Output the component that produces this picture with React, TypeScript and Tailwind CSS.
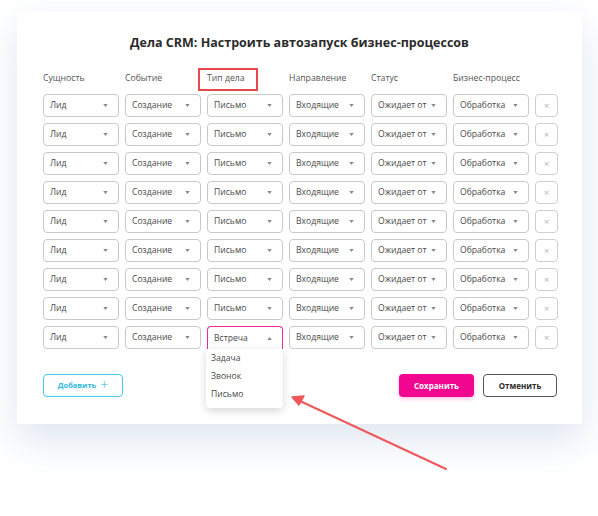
import React from "react";

const columns = ["Сущность", "Событие", "Тип дела", "Направление", "Статус", "Бизнес-процесс"];
const values = ["Лид", "Создание", "Письмо", "Входящие", "Ожидает от", "Обработка"];

const Caret = ({ up }: { up?: boolean }) => (
	<svg width="5" height="3" viewBox="0 0 6 4" className="shrink-0">
		{up ? <path d="M0 4 L3 0 L6 4 Z" fill="#8a8a8a" /> : <path d="M0 0 L6 0 L3 4 Z" fill="#8a8a8a" />}
	</svg>
);

const Select = ({ value }: { value: string }) => (
	<div className="w-[76px] h-[23px] border border-[#c9c9c9] rounded-[4px] flex items-center justify-between pl-[6px] pr-[10px] text-[8.6px] text-[#4a4a4a] whitespace-nowrap overflow-hidden">
		<span>{value}</span>
		<Caret />
	</div>
);

const OpenSelect = () => (
	<div className="relative w-[76px] h-[23px]">
		<div className="w-[76px] h-[23px] border border-[#ec2a9a] border-b-0 rounded-t-[4px] flex items-center justify-between pl-[6px] pr-[10px] text-[8.6px] text-[#4a4a4a] bg-white">
			<span>Встреча</span>
			<Caret up />
		</div>
		<div className="absolute left-0 top-[23px] w-[77px] -ml-px bg-white rounded-b-[4px] shadow-[0_3px_8px_rgba(0,0,0,0.16)] pt-0 pb-[5px] flex flex-col z-10">
			{["Задача", "Звонок", "Письмо"].map((t) => (
				<div key={t} className="h-[18px] flex items-center pl-[5px] text-[8.6px] text-[#4a4a4a]">
					{t}
				</div>
			))}
		</div>
	</div>
);

const RemoveButton = () => (
	<div className="w-[23px] h-[23px] border border-[#cfcfcf] rounded-[4px] flex items-center justify-center text-[#b5b5b5] text-[9px] leading-none">
		×
	</div>
);

export default function App() {
	const rows = Array.from({ length: 9 }, (_, i) => i);

	return (
		<div
			className="relative w-[598px] h-[516px] bg-white pt-[12px] pl-[17px] overflow-hidden"
			style={{ fontFamily: "'Open Sans', 'Noto Sans', sans-serif" }}
		>
			<div className="relative w-[565px] h-[412px] bg-white shadow-[0_16px_36px_rgba(70,110,170,0.18)] pl-[26px]">
				<h1 className="pt-[22px] text-center pr-[26px] text-[12.5px] leading-[18px] font-bold text-[#2b2b2b]">
					Дела CRM: Настроить автозапуск бизнес-процессов
				</h1>

				<div className="mt-[19px] flex gap-[6px]">
					{columns.map((c, i) => (
						<div key={c} className="w-[76px] h-[16px] flex items-center text-[8.7px] text-[#555] whitespace-nowrap">
							{i === 2 ? (
								<span className="-ml-[9px] pl-[7px] h-[23px] w-[60px] flex items-center border-2 border-[#e8474c]">{c}</span>
							) : (
								<span>{c}</span>
							)}
						</div>
					))}
				</div>

				<div className="mt-[7px] flex flex-col gap-[6px]">
					{rows.map((r) => (
						<div key={r} className="flex gap-[6px]">
							{values.map((v, i) =>
								r === 8 && i === 2 ? <OpenSelect key={i} /> : <Select key={i} value={v} />
							)}
							<RemoveButton />
						</div>
					))}
				</div>

				<div className="mt-[25px] flex items-center pr-[25px]">
					<button className="w-[80px] h-[23px] border border-[#43c8ea] rounded-[4px] flex items-center justify-center gap-[4px] text-[7.5px] font-bold text-[#2fb8e0]">
						Добавить
						<span className="text-[14px] font-light leading-none -mt-[1px]">+</span>
					</button>
					<div className="flex-1" />
					<button className="w-[75px] h-[23px] bg-[#f2068f] rounded-[4px] text-[8px] font-bold text-white shadow-[0_2px_4px_rgba(242,6,143,0.25)]">
						Сохранить
					</button>
					<button className="ml-[9px] w-[74px] h-[23px] border border-[#555] rounded-[4px] text-[8px] font-bold text-[#2b2b2b]">
						Отменить
					</button>
				</div>
			</div>

			<svg className="absolute left-0 top-0" width="598" height="516" viewBox="0 0 598 516">
				<line x1="446" y1="469" x2="300" y2="401" stroke="#f0575a" strokeWidth="2" strokeLinecap="round" />
				<path d="M292 397 L304 396 L299 405 Z" fill="#f0575a" stroke="#f0575a" strokeWidth="1.5" strokeLinejoin="round" />
			</svg>
		</div>
	);
}
